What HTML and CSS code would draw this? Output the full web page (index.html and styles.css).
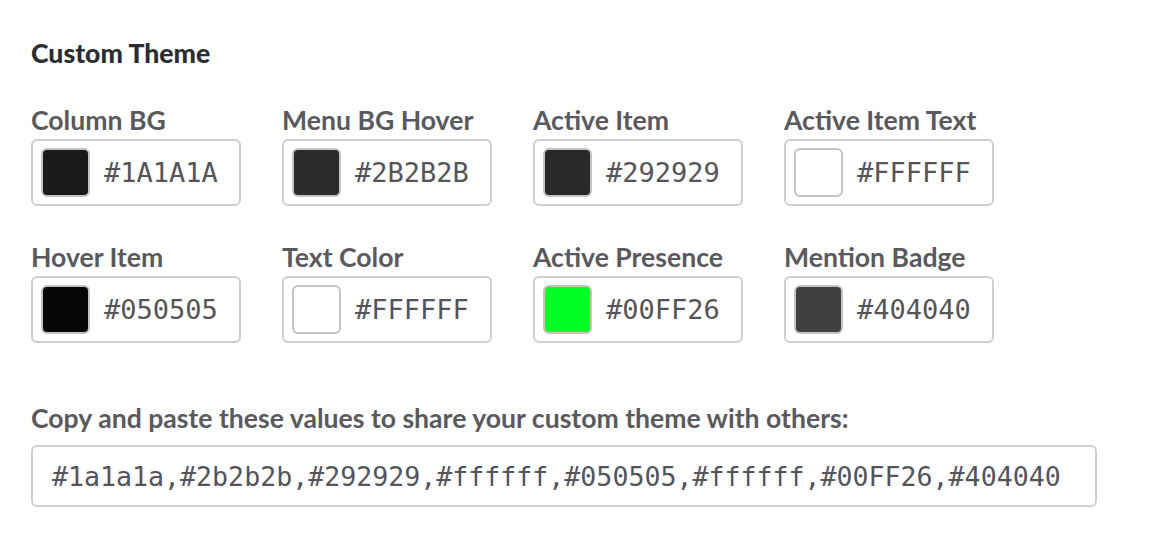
FILE: index.html
```html
<!DOCTYPE html>
<html lang="en">
<head>
<meta charset="utf-8">
<title>Custom Theme</title>
<link rel="stylesheet" href="styles.css">
</head>
<body>
<section class="theme">
  <h2 class="theme-title">Custom Theme</h2>
  <div class="swatch-grid">
    <div class="field">
      <div class="field-label">Column BG</div>
      <div class="color-input"><span class="swatch" style="background:#1A1A1A"></span><span class="hex">#1A1A1A</span></div>
    </div>
    <div class="field">
      <div class="field-label">Menu BG Hover</div>
      <div class="color-input"><span class="swatch" style="background:#2B2B2B"></span><span class="hex">#2B2B2B</span></div>
    </div>
    <div class="field">
      <div class="field-label">Active Item</div>
      <div class="color-input"><span class="swatch" style="background:#292929"></span><span class="hex">#292929</span></div>
    </div>
    <div class="field">
      <div class="field-label">Active Item Text</div>
      <div class="color-input"><span class="swatch" style="background:#FFFFFF"></span><span class="hex">#FFFFFF</span></div>
    </div>
    <div class="field">
      <div class="field-label">Hover Item</div>
      <div class="color-input"><span class="swatch" style="background:#050505"></span><span class="hex">#050505</span></div>
    </div>
    <div class="field">
      <div class="field-label">Text Color</div>
      <div class="color-input"><span class="swatch" style="background:#FFFFFF"></span><span class="hex">#FFFFFF</span></div>
    </div>
    <div class="field">
      <div class="field-label">Active Presence</div>
      <div class="color-input"><span class="swatch" style="background:#00FF26"></span><span class="hex">#00FF26</span></div>
    </div>
    <div class="field">
      <div class="field-label">Mention Badge</div>
      <div class="color-input"><span class="swatch" style="background:#404040"></span><span class="hex">#404040</span></div>
    </div>
  </div>
  <div class="share-label">Copy and paste these values to share your custom theme with others:</div>
  <div class="share-box">#1a1a1a,#2b2b2b,#292929,#ffffff,#050505,#ffffff,#00FF26,#404040</div>
</section>
</body>
</html>
```

FILE: styles.css
```css
html, body {
  margin: 0;
  padding: 0;
  background: #ffffff;
}

body {
  font-family: Lato, "Noto Sans", sans-serif;
  color: #555459;
}

.theme {
  padding: 38px 0 0 31px;
}

.theme-title {
  margin: 0;
  font-size: 26.6px;
  line-height: 30px;
  font-weight: 900;
  color: #2c2d30;
}

.swatch-grid {
  display: grid;
  grid-template-columns: repeat(4, 210px);
  column-gap: 41px;
  row-gap: 36px;
  margin-top: 37px;
}

.field-label {
  font-size: 26.6px;
  line-height: 30px;
  font-weight: 700;
  color: #5a595e;
  margin-bottom: 4px;
  white-space: nowrap;
}

.color-input {
  box-sizing: border-box;
  height: 67px;
  border: 2px solid #cfcfcf;
  border-radius: 6px;
  display: flex;
  align-items: center;
  padding-left: 8px;
  gap: 14px;
  background: #fff;
}

.swatch {
  box-sizing: border-box;
  width: 49px;
  height: 49px;
  border: 2px solid #c4c4c4;
  border-radius: 6px;
  flex: none;
}

.hex {
  font-family: "DejaVu Sans Mono", monospace;
  font-size: 27px;
  color: #555459;
}

.share-label {
  margin-top: 60px;
  font-size: 26.6px;
  line-height: 30px;
  font-weight: 700;
  color: #5a595e;
}

.share-box {
  box-sizing: border-box;
  margin-top: 12px;
  width: 1066px;
  height: 62px;
  border: 2px solid #cfcfcf;
  border-radius: 6px;
  display: flex;
  align-items: center;
  padding-left: 19px;
  font-family: "DejaVu Sans Mono", monospace;
  font-size: 26.6px;
  color: #555459;
  white-space: nowrap;
}
```
